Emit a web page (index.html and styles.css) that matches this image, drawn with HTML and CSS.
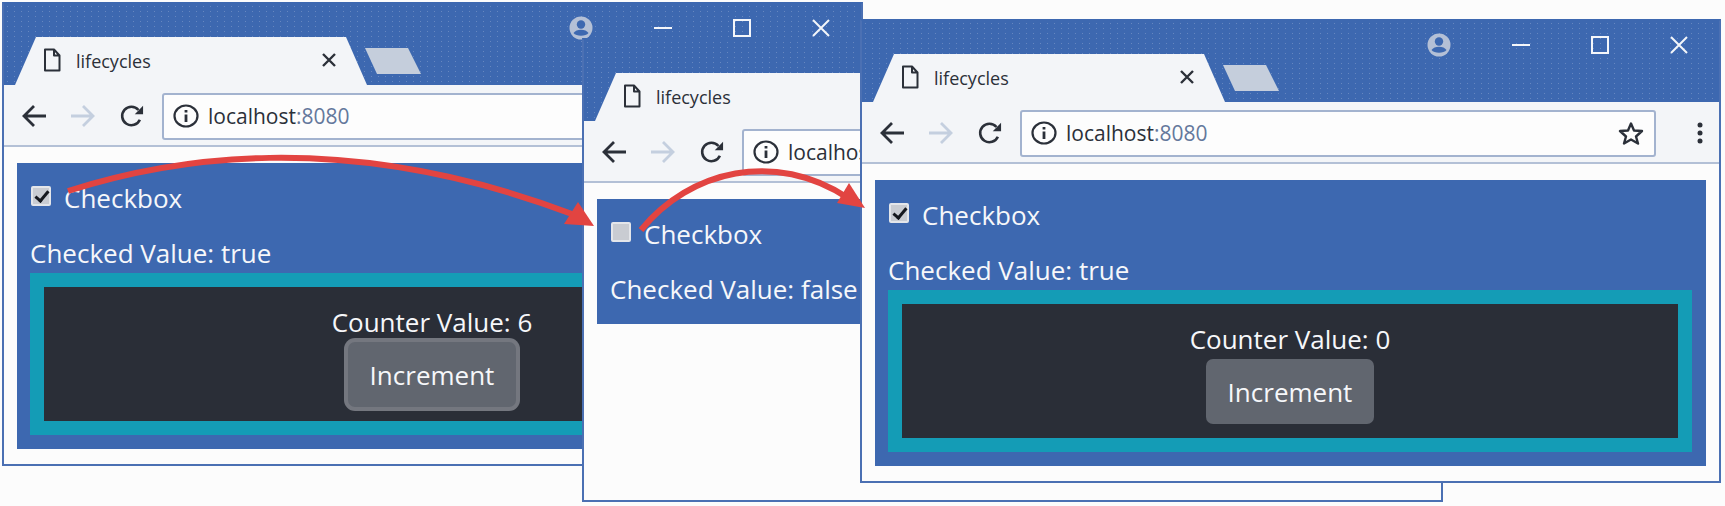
FILE: index.html
```html
<!DOCTYPE html>
<html lang="en">
<head>
<meta charset="UTF-8">
<title>lifecycles</title>
<link rel="stylesheet" href="styles.css">
</head>
<body>

<svg class="sprites" width="0" height="0" aria-hidden="true">
    <symbol id="i-file" viewBox="0 0 18 24">
        <path d="M2 1.500H11L16.500 7.500V22.500H2Z M11 1.500V7.500H16.500" fill="none" stroke="#2b3039" stroke-width="2" stroke-linejoin="round"/>
    </symbol>
    <symbol id="i-x" viewBox="0 0 16 14">
        <path d="M2 1L14 13M14 1L2 13" fill="none" stroke="#2b3039" stroke-width="2.400"/>
    </symbol>
    <symbol id="i-arrow" viewBox="0 0 26 24">
        <path d="M25 12H3M13 2L3 12L13 22" fill="none" stroke="currentColor" stroke-width="2.800"/>
    </symbol>
    <symbol id="i-reload" viewBox="0 0 26 26">
        <path d="M21.500 17A10 10 0 1 1 20 6.500" fill="none" stroke="#2b3039" stroke-width="2.800"/>
        <path d="M25 2V11H16Z" fill="#2b3039"/>
    </symbol>
    <symbol id="i-info" viewBox="0 0 26 24">
        <ellipse cx="13" cy="12" rx="11.500" ry="10.500" fill="none" stroke="#2b3039" stroke-width="2.200"/>
        <path d="M13 10.500V18M13 6V8.500" fill="none" stroke="#2b3039" stroke-width="2.800"/>
    </symbol>
    <symbol id="i-star" viewBox="0 0 26 24">
        <path d="M13 2.500L16 9.500L24 10L18 15.500L20 22.500L13 18.500L6 22.500L8 15.500L2 10L10 9.500Z" fill="none" stroke="#2b3039" stroke-width="2.400" stroke-linejoin="round"/>
    </symbol>
    <symbol id="i-dots" viewBox="0 0 6 24">
        <circle cx="3" cy="4" r="2.500" fill="#2b3039"/>
        <circle cx="3" cy="12" r="2.500" fill="#2b3039"/>
        <circle cx="3" cy="20" r="2.500" fill="#2b3039"/>
    </symbol>
    <symbol id="i-avatar" viewBox="0 0 24 24">
        <circle cx="12" cy="12" r="11.500" fill="#b4c0d6"/>
        <circle cx="12" cy="8.500" r="4.200" fill="#3d68b0"/>
        <path d="M4.500 17C7 12.500 17 12.500 19.500 17C17 20.500 7 20.500 4.500 17Z" fill="#3d68b0"/>
    </symbol>
    <symbol id="i-min" viewBox="0 0 18 18">
        <path d="M0 9H18" stroke="#f4f6fa" stroke-width="2"/>
    </symbol>
    <symbol id="i-max" viewBox="0 0 18 18">
        <path d="M1 1H17V17H1Z" fill="none" stroke="#f4f6fa" stroke-width="2"/>
    </symbol>
    <symbol id="i-close" viewBox="0 0 18 18">
        <path d="M1 1L17 17M17 1L1 17" fill="none" stroke="#f4f6fa" stroke-width="2"/>
    </symbol>
</svg>

<main class="desktop">

    <section class="window window-first">
        <div class="titlebar">
            <div class="tab">
                <svg class="icon-file"><use href="#i-file"/></svg>
                <span class="tab-title">lifecycles</span>
                <svg class="icon-tabclose"><use href="#i-x"/></svg>
            </div>
            <div class="newtab"></div>
            <div class="controls">
                <svg class="icon-avatar"><use href="#i-avatar"/></svg>
                <svg class="icon-ctrl"><use href="#i-min"/></svg>
                <svg class="icon-ctrl"><use href="#i-max"/></svg>
                <svg class="icon-ctrl"><use href="#i-close"/></svg>
            </div>
        </div>
        <div class="toolbar">
            <svg class="icon-nav"><use href="#i-arrow"/></svg>
            <svg class="icon-nav icon-forward"><use href="#i-arrow"/></svg>
            <svg class="icon-nav"><use href="#i-reload"/></svg>
            <div class="address">
                <svg class="icon-info"><use href="#i-info"/></svg>
                <span class="url">localhost<span class="port">:8080</span></span>
                <svg class="icon-star"><use href="#i-star"/></svg>
            </div>
            <svg class="icon-dots"><use href="#i-dots"/></svg>
        </div>
        <div class="content">
            <div class="panel">
                <label class="check-row"><input type="checkbox" class="check" checked> Checkbox</label>
                <div class="value-row">Checked Value: true</div>
                <div class="counter-box">
                    <div class="counter-inner">
                        <div class="counter-text">Counter Value: 6</div>
                        <button type="button" class="btn btn-focus">Increment</button>
                    </div>
                </div>
            </div>
        </div>
    </section>

    <section class="window window-second">
        <div class="titlebar">
            <div class="tab">
                <svg class="icon-file"><use href="#i-file"/></svg>
                <span class="tab-title">lifecycles</span>
                <svg class="icon-tabclose"><use href="#i-x"/></svg>
            </div>
        </div>
        <div class="toolbar">
            <svg class="icon-nav"><use href="#i-arrow"/></svg>
            <svg class="icon-nav icon-forward"><use href="#i-arrow"/></svg>
            <svg class="icon-nav"><use href="#i-reload"/></svg>
            <div class="address">
                <svg class="icon-info"><use href="#i-info"/></svg>
                <span class="url">localhost<span class="port">:8080</span></span>
                <svg class="icon-star"><use href="#i-star"/></svg>
            </div>
            <svg class="icon-dots"><use href="#i-dots"/></svg>
        </div>
        <div class="content">
            <div class="panel panel-short">
                <label class="check-row"><input type="checkbox" class="check"> Checkbox</label>
                <div class="value-row">Checked Value: false</div>
            </div>
        </div>
    </section>

    <section class="window window-third">
        <div class="titlebar">
            <div class="tab">
                <svg class="icon-file"><use href="#i-file"/></svg>
                <span class="tab-title">lifecycles</span>
                <svg class="icon-tabclose"><use href="#i-x"/></svg>
            </div>
            <div class="newtab"></div>
            <div class="controls">
                <svg class="icon-avatar"><use href="#i-avatar"/></svg>
                <svg class="icon-ctrl"><use href="#i-min"/></svg>
                <svg class="icon-ctrl"><use href="#i-max"/></svg>
                <svg class="icon-ctrl"><use href="#i-close"/></svg>
            </div>
        </div>
        <div class="toolbar">
            <svg class="icon-nav"><use href="#i-arrow"/></svg>
            <svg class="icon-nav icon-forward"><use href="#i-arrow"/></svg>
            <svg class="icon-nav"><use href="#i-reload"/></svg>
            <div class="address">
                <svg class="icon-info"><use href="#i-info"/></svg>
                <span class="url">localhost<span class="port">:8080</span></span>
                <svg class="icon-star"><use href="#i-star"/></svg>
            </div>
            <svg class="icon-dots"><use href="#i-dots"/></svg>
        </div>
        <div class="content">
            <div class="panel">
                <label class="check-row"><input type="checkbox" class="check" checked> Checkbox</label>
                <div class="value-row">Checked Value: true</div>
                <div class="counter-box">
                    <div class="counter-inner">
                        <div class="counter-text">Counter Value: 0</div>
                        <button type="button" class="btn">Increment</button>
                    </div>
                </div>
            </div>
        </div>
    </section>

    <!-- the two red arrows drawn over the windows -->
    <svg class="arrows" viewBox="0 0 1725 506">
        <path d="M68 191C165 160 340 126 572 214" fill="none" stroke="#e24441" stroke-width="6"/>
        <path d="M594 226L564 224L578 202Z" fill="#e24441"/>
        <path d="M641 230C690 170 775 150 848 198" fill="none" stroke="#e24441" stroke-width="6"/>
        <path d="M865 208L837 203L849 183Z" fill="#e24441"/>
    </svg>

</main>

</body>
</html>
```

FILE: styles.css
```css
body {
    margin: 0;
    background-color: #fcfcfc;
    font-family: "Open Sans", "Liberation Sans", sans-serif;
}

.sprites {
    display: block;
    width: 0;
    height: 0;
}

.desktop {
    position: relative;
    width: 1725px;
    height: 506px;
    overflow: hidden;
}

/* windows sit freely on the desktop and overlap */
.window {
    position: absolute;
    box-sizing: border-box;
    width: 861px;
    height: 464px;
    display: flex;
    flex-direction: column;
    background-color: #fcfcfc;
    border: 2px solid #4b70b3;
    border-top-color: #3d68b0;
}

.window-first {
    left: 2px;
    top: 2px;
    z-index: 1;
}

.window-second {
    left: 582px;
    top: 38px;
    z-index: 2;
}

.window-third {
    left: 860px;
    top: 19px;
    z-index: 3;
}

.titlebar {
    flex: none;
    height: 81px;
    box-sizing: border-box;
    padding-left: 11px;
    display: flex;
    background-color: #3d68b0;
    background-image: radial-gradient(#6687c0 0.6px, transparent 0.8px);
    background-size: 7px 5px;
}

.tab {
    flex: none;
    align-self: flex-end;
    box-sizing: border-box;
    width: 352px;
    height: 48px;
    padding: 0 30px 0 28px;
    display: flex;
    align-items: center;
    background-color: #f3f5f8;
    clip-path: polygon(0 100%, 21px 0, 331px 0, 100% 100%);
}

.icon-file {
    width: 18px;
    height: 24px;
    margin-top: -2px;
}

.tab-title {
    margin-left: 15px;
    font-size: 18px;
    color: #2b3039;
}

.icon-tabclose {
    width: 16px;
    height: 14px;
    margin-left: auto;
    margin-top: -2px;
}

.newtab {
    flex: none;
    align-self: flex-end;
    width: 56px;
    height: 26px;
    margin: 0 0 11px -2px;
    background-color: #c5cedc;
    clip-path: polygon(0 0, 43px 0, 100% 100%, 12px 100%);
}

.controls {
    margin: 12px 31px 0 auto;
    height: 24px;
    display: flex;
    align-items: center;
    gap: 61px;
}

.icon-avatar {
    width: 24px;
    height: 24px;
}

.icon-ctrl {
    width: 18px;
    height: 18px;
}

.toolbar {
    flex: none;
    height: 62px;
    box-sizing: border-box;
    padding: 2px 16px 0 17px;
    display: flex;
    align-items: center;
    background-color: #f3f5f8;
    border-bottom: 2px solid #b3c0d6;
}

.icon-nav {
    width: 26px;
    height: 24px;
    margin-right: 23px;
    color: #2b3039;
}

.icon-forward {
    color: #c4cfdf;
    transform: scaleX(-1);
}

.address {
    flex: none;
    box-sizing: border-box;
    width: 636px;
    height: 47px;
    margin-left: -6px;
    padding: 0 10px 0 9px;
    display: flex;
    align-items: center;
    background-color: #fdfdfd;
    border: 2px solid #a3b3cf;
    border-radius: 3px;
}

.icon-info {
    width: 26px;
    height: 24px;
}

.url {
    margin-left: 9px;
    font-size: 21px;
    color: #2b3039;
}

.port {
    color: #64789c;
}

.icon-star {
    width: 26px;
    height: 24px;
    margin-left: auto;
}

.icon-dots {
    width: 6px;
    height: 24px;
    margin-left: auto;
}

.content {
    flex: 1;
    padding: 16px 13px 14px;
    display: flex;
    min-height: 0;
}

.panel {
    flex: 1;
    box-sizing: border-box;
    min-width: 831px;
    height: 286px;
    padding: 16px 13px 0;
    background-color: #3d68b0;
    color: #f6f7fa;
    font-size: 26px;
}

.panel-short {
    height: 125px;
}

.check-row {
    height: 38px;
    display: flex;
    align-items: center;
    gap: 13px;
}

.check {
    appearance: none;
    position: relative;
    flex: none;
    box-sizing: border-box;
    width: 20px;
    height: 20px;
    margin: -4px 0 0 1px;
    background-color: #c9ccd2;
    border: 2px solid #e4e6ea;
    border-radius: 2px;
}

.check:checked::after {
    content: "";
    position: absolute;
    left: 5px;
    top: 0;
    width: 5px;
    height: 11px;
    border: solid #15181e;
    border-width: 0 3px 3px 0;
    transform: rotate(40deg);
}

.value-row {
    height: 38px;
    margin-top: 17px;
    line-height: 38px;
    white-space: nowrap;
}

.counter-box {
    box-sizing: border-box;
    width: 804px;
    height: 162px;
    margin-top: 1px;
    border: 14px solid #149cb6;
}

.counter-inner {
    height: 134px;
    box-sizing: border-box;
    padding-top: 16px;
    display: flex;
    flex-direction: column;
    align-items: center;
    background-color: #2a2e37;
}

.counter-text {
    height: 38px;
    line-height: 38px;
}

.btn {
    width: 168px;
    height: 65px;
    margin-top: 1px;
    padding: 0;
    border: none;
    border-radius: 7px;
    background-color: #61666f;
    color: #f6f7fa;
    font: inherit;
}

.btn-focus {
    box-shadow: 0 0 0 4px #74777f;
}

.arrows {
    position: absolute;
    left: 0;
    top: 0;
    width: 1725px;
    height: 506px;
    z-index: 4;
}
```
